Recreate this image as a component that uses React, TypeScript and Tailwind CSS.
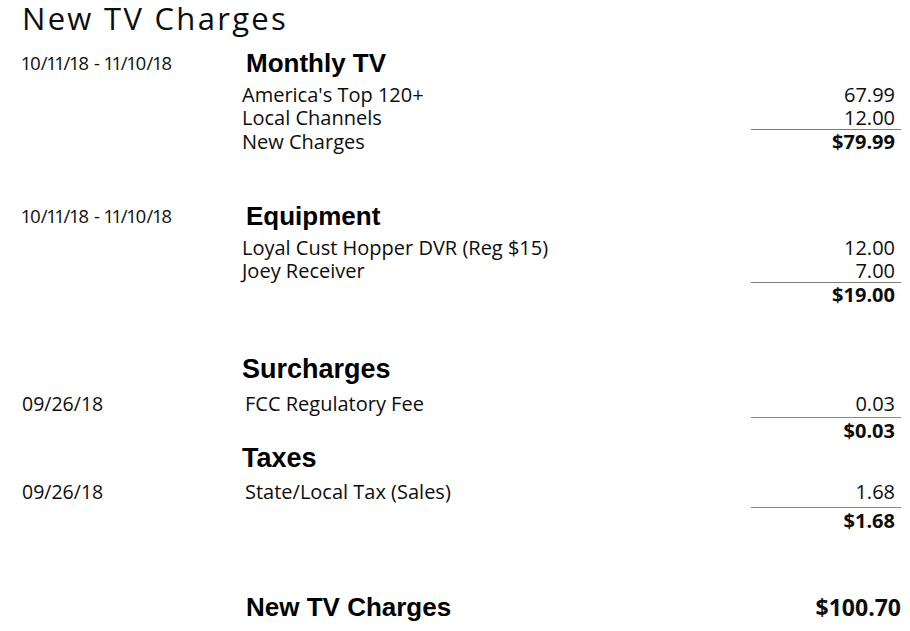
const row = "grid grid-cols-[220px_1fr_150px]";
const body = "font-['Open_Sans',sans-serif] text-[#0d0d0d]";
const head = "font-['Liberation_Sans',Arial,sans-serif] font-bold text-black";
const rule = "border-t border-[#7a7a7a]";

type Item = { label: string; amount: string };

function Lines({ items, total, last }: { items: Item[]; total: string; last?: string }) {
  return (
    <>
      {items.map((it) => (
        <div key={it.label} className={`${row} ${body} font-medium text-[20px] leading-[23px]`}>
          <div />
          <div>{it.label}</div>
          <div className="text-right pr-[6px]">{it.amount}</div>
        </div>
      ))}
      <div className={`${row} ${body}`}>
        <div />
        <div className="font-medium text-[20px] leading-[25px]">{last}</div>
        <div className={`${rule} text-right pr-[6px] text-[20px] font-bold leading-[24px]`}>{total}</div>
      </div>
    </>
  );
}

export default function App() {
  return (
    <div className="w-[910px] h-[631px] bg-white pl-[22px] pr-[9px] overflow-hidden">
      <h1 className={`${body} font-normal text-[31px] leading-[36px] tracking-[2.3px]`}>New TV Charges</h1>

      {/* Monthly TV */}
      <div className={`${row} mt-[14px] items-center`}>
        <div className={`${body} font-medium text-[18.5px] leading-[26px] proportional-nums`}>10/11/18 - 11/10/18</div>
        <div className={`${head} text-[26px] leading-[26px] pl-[4px]`}>Monthly TV</div>
      </div>
      <div className="mt-[7px]">
        <Lines
          items={[
            { label: "America's Top 120+", amount: "67.99" },
            { label: "Local Channels", amount: "12.00" },
          ]}
          last="New Charges"
          total="$79.99"
        />
      </div>

      {/* Equipment */}
      <div className={`${row} mt-[49px] items-center`}>
        <div className={`${body} font-medium text-[18.5px] leading-[26px] proportional-nums`}>10/11/18 - 11/10/18</div>
        <div className={`${head} text-[26px] leading-[26px] pl-[4px]`}>Equipment</div>
      </div>
      <div className="mt-[7px]">
        <Lines
          items={[
            { label: "Loyal Cust Hopper DVR (Reg $15)", amount: "12.00" },
            { label: "Joey Receiver", amount: "7.00" },
          ]}
          total="$19.00"
        />
      </div>

      {/* Surcharges */}
      <div className={`${row} mt-[49px]`}>
        <div />
        <div className={`${head} text-[27px] leading-[26px]`}>Surcharges</div>
      </div>
      <div className={`${row} ${body} font-medium mt-[9px] text-[20px] leading-[26px]`}>
        <div className="text-[19.5px]">09/26/18</div>
        <div className="pl-[3px]">FCC Regulatory Fee</div>
        <div className="text-right pr-[6px]">0.03</div>
      </div>
      <div className={row}>
        <div />
        <div />
        <div className={`${body} border-t border-[#8a8a8a] text-right pr-[6px] text-[20px] font-bold leading-[26px]`}>$0.03</div>
      </div>

      {/* Taxes */}
      <div className={row}>
        <div />
        <div className={`${head} text-[27px] leading-[28px]`}>Taxes</div>
      </div>
      <div className={`${row} ${body} font-medium mt-[7px] pb-[3px] text-[20px] leading-[25px]`}>
        <div className="text-[19.5px]">09/26/18</div>
        <div className="pl-[3px]">State/Local Tax (Sales)</div>
        <div className="text-right pr-[6px]">1.68</div>
      </div>
      <div className={row}>
        <div />
        <div />
        <div className={`${body} border-t border-[#8a8a8a] text-right pr-[6px] text-[20px] font-bold leading-[26px]`}>$1.68</div>
      </div>

      {/* Grand total */}
      <div className={`${row} mt-[59px] items-center`}>
        <div />
        <div className={`${head} text-[26px] leading-[28px] pl-[4px]`}>New TV Charges</div>
        <div className={`${body} font-bold text-right text-[23px] leading-[28px]`}>$100.70</div>
      </div>
    </div>
  );
}
